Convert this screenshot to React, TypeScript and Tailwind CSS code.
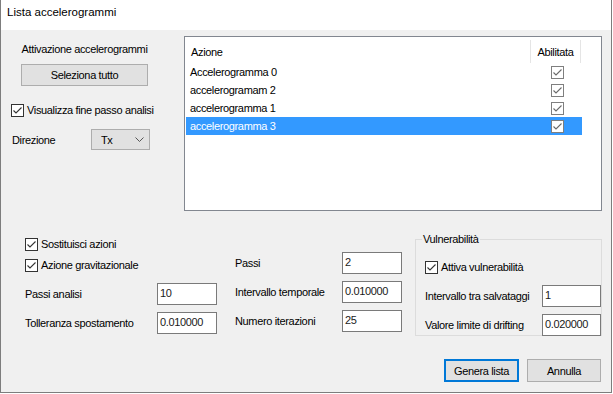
const FONT = "font-['Liberation_Sans',Arial,sans-serif]";

const CheckBox = ({ light = false }: { light?: boolean }) => (
  <svg width="13" height="13" viewBox="0 0 13 13" className="shrink-0">
    <rect x="0.5" y="0.5" width="12" height="12" fill="#fff" stroke={light ? '#7f7f7f' : '#333333'} />
    <path d="M2.5 6.5 L5 9 L10.5 3.5" fill="none" stroke={light ? '#6a6a6a' : '#333333'} strokeWidth="1.1" />
  </svg>
);

const CheckRow = ({ label }: { label: string }) => (
  <div className="flex items-center gap-[3px] h-[14px] whitespace-nowrap">
    <CheckBox />
    <span>{label}</span>
  </div>
);

const Field = ({ value, w = 'w-[60px]' }: { value: string; w?: string }) => (
  <div className={`${w} h-[22px] shrink-0 bg-white border border-[#7a7a7a] pl-[2px] pt-[2px] leading-[14px] text-[#1a1a1a]`}>
    {value}
  </div>
);

const FormRow = ({ label, value, labelW }: { label: string; value: string; labelW: string }) => (
  <div className="flex items-center">
    <span className={`${labelW} shrink-0 whitespace-nowrap`}>{label}</span>
    <Field value={value} />
  </div>
);

const rows = ['Accelerogramma 0', 'accelerogramam 2', 'accelerogramma 1', 'accelerogramma 3'];

export default function App() {
  return (
    <div className={`w-[613px] h-[394px] bg-white ${FONT} text-[11px] leading-[14px] tracking-[-0.35px] text-black`}>
      <div className="w-[612px] h-[393px] flex flex-col border-x border-b border-[#7d7d7d] bg-[#f0f0f0]">
        {/* title bar */}
        <div className="h-[30px] shrink-0 bg-white pl-[6px] pt-[5px] text-[11.5px] tracking-normal">
          Lista accelerogrammi
        </div>

        {/* top area */}
        <div className="flex mt-[6px]">
          <div className="w-[183px] shrink-0 flex flex-col">
            <div className="ml-[20px] w-[127px] mt-[6px] flex justify-center whitespace-nowrap">
              <span>Attivazione accelerogrammi</span>
            </div>
            <button className="ml-[20px] mt-[8px] w-[127px] h-[22px] bg-[#e1e1e1] border border-[#adadad] text-center">
              Seleziona tutto
            </button>
            <div className="pl-[10px] mt-[17px]">
              <CheckRow label="Visualizza fine passo analisi" />
            </div>
            <div className="flex items-center pl-[11px] mt-[12px]">
              <span className="w-[79px] shrink-0">Direzione</span>
              <div className="w-[59px] h-[21px] flex items-center justify-between bg-[#e1e1e1] border border-[#adadad] pl-[9px] pr-[5px]">
                <span>Tx</span>
                <svg width="9" height="5" viewBox="0 0 9 5">
                  <path d="M0.5 0.5 L4.5 4.5 L8.5 0.5" fill="none" stroke="#555" strokeWidth="1" />
                </svg>
              </div>
            </div>
          </div>

          {/* list view */}
          <div className="w-[418px] h-[175px] shrink-0 bg-white border border-[#828790] flex flex-col">
            <div className="flex h-[26px] shrink-0">
              <div className="w-[346px] mt-[3px] border-r border-[#e5e5e5] pl-[6px] flex items-end pb-[4px]">Azione</div>
              <div className="w-[50px] mt-[3px] border-r border-[#e5e5e5] flex items-end justify-center pb-[4px]">Abilitata</div>
            </div>
            {rows.map((r, i) => (
              <div
                key={r}
                className={`flex items-center h-[18px] ml-[1px] w-[396px] ${i === 3 ? 'bg-[#3399ff] text-white' : ''}`}
              >
                <span className="flex-1 pl-[4px]">{r}</span>
                <span className="w-[50px] flex justify-center">
                  <CheckBox light />
                </span>
              </div>
            ))}
          </div>
        </div>

        {/* bottom area */}
        <div className="flex items-start mt-[21px]">
          <div className="ml-[24px] w-[192px] shrink-0 flex flex-col pt-[5px]">
            <CheckRow label="Sostituisci azioni" />
            <div className="mt-[7px]">
              <CheckRow label="Azione gravitazionale" />
            </div>
            <div className="mt-[11px] flex flex-col gap-[7px]">
              <FormRow label="Passi analisi" value="10" labelW="w-[132px]" />
              <FormRow label="Tolleranza spostamento" value="0.010000" labelW="w-[132px]" />
            </div>
          </div>

          <div className="ml-[18px] w-[167px] shrink-0 flex flex-col gap-[7px] pt-[20px]">
            <FormRow label="Passi" value="2" labelW="w-[107px]" />
            <FormRow label="Intervallo temporale" value="0.010000" labelW="w-[107px]" />
            <FormRow label="Numero iterazioni" value="25" labelW="w-[107px]" />
          </div>

          <fieldset className="ml-[13px] w-[187px] shrink-0 border border-[#dcdcdc] pl-[9px]">
            <legend className="ml-[-3px] px-[1px]">Vulnerabilità</legend>
            <div className="mt-[14px]">
              <CheckRow label="Attiva vulnerabilità" />
            </div>
            <div className="mt-[11px] flex flex-col gap-[7px] mb-[-1px]">
              <div className="flex items-center">
                <span className="w-[117px] shrink-0 whitespace-nowrap">Intervallo tra salvataggi</span>
                <Field value="1" w="w-[59px]" />
              </div>
              <div className="flex items-center">
                <span className="w-[117px] shrink-0 whitespace-nowrap">Valore limite di drifting</span>
                <Field value="0.020000" w="w-[59px]" />
              </div>
            </div>
          </fieldset>
        </div>

        {/* buttons */}
        <div className="flex justify-end gap-[8px] pr-[10px] mt-[23px]">
          <button className="w-[75px] h-[23px] bg-[#e1e1e1] border-2 border-[#0078d7]">Genera lista</button>
          <button className="w-[74px] h-[23px] bg-[#e1e1e1] border border-[#adadad]">Annulla</button>
        </div>
      </div>
    </div>
  );
}
